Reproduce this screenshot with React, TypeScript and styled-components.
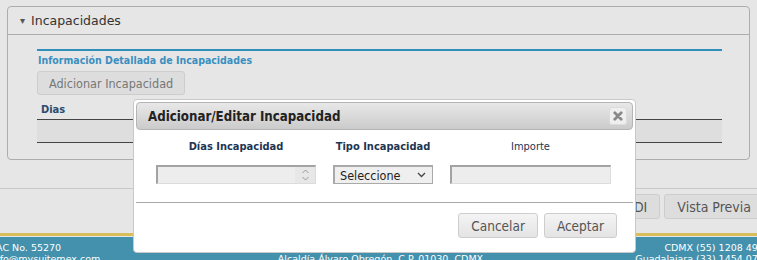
import styled, { createGlobalStyle } from 'styled-components';

const GlobalStyle = createGlobalStyle`
  html, body {
    margin: 0;
    padding: 0;
    background: #e6e6e6;
    overflow: hidden;
  }
  * {
    box-sizing: border-box;
  }
`;

const uiFont = `"DejaVu Sans Condensed", "DejaVu Sans", sans-serif`;

const App = () => {
  return (
    <>
      <GlobalStyle />
      <Page>
        <Main>
          <Panel>
            <PanelHeader>
              <Caret>▾</Caret>
              Incapacidades
            </PanelHeader>
            <PanelBody>
              <SectionTitle>Información Detallada de Incapacidades</SectionTitle>
              <GrayButton>Adicionar Incapacidad</GrayButton>
              <Table>
                <TableHead>Dias</TableHead>
                <TableRow />
              </Table>
            </PanelBody>
          </Panel>
        </Main>

        <Toolbar>
          <GrayButton $size="lg">Enviar CFDI</GrayButton>
          <GrayButton $size="lg">Vista Previa</GrayButton>
        </Toolbar>

        <Footer>
          <GoldBar />
          <FooterBand>
            <FooterCol $align="left">
              <span>PAC No. 55270</span>
              <span>info@mysuitemex.com</span>
            </FooterCol>
            <FooterCol $align="center">
              <span>Av. Revolución 1267, Col. Los Alpes</span>
              <span>Alcaldía Álvaro Obregón, C.P. 01030, CDMX</span>
            </FooterCol>
            <FooterCol $align="right">
              <span>CDMX (55) 1208 4936</span>
              <span>Guadalajara (33) 1454 0736</span>
            </FooterCol>
          </FooterBand>
        </Footer>

        <Dialog>
          <DialogTitleBar>
            <DialogTitle>Adicionar/Editar Incapacidad</DialogTitle>
            <CloseButton aria-label="Cerrar">
              <svg width="10" height="10" viewBox="0 0 10 10">
                <path d="M1.8 1.8 L8.2 8.2 M8.2 1.8 L1.8 8.2" stroke="#888" strokeWidth="2.8" strokeLinecap="round" />
              </svg>
            </CloseButton>
          </DialogTitleBar>
          <FieldGrid>
            <FieldLabel>Días Incapacidad</FieldLabel>
            <FieldLabel>Tipo Incapacidad</FieldLabel>
            <FieldLabel $plain>Importe</FieldLabel>

            <NumberBox>
              <Spinner>
                <svg width="9" height="14" viewBox="0 0 9 14">
                  <path d="M1.5 5 L4.5 2 L7.5 5 M1.5 9 L4.5 12 L7.5 9" fill="none" stroke="#9a9a9a" strokeWidth="1" />
                </svg>
              </Spinner>
            </NumberBox>
            <SelectBox>
              Seleccione
              <svg width="9" height="6" viewBox="0 0 9 6">
                <path d="M1 1 L4.5 4.5 L8 1" fill="none" stroke="#444" strokeWidth="1.3" />
              </svg>
            </SelectBox>
            <TextBox />
          </FieldGrid>
          <DialogFooter>
            <GrayButton $size="md">Cancelar</GrayButton>
            <GrayButton $size="md">Aceptar</GrayButton>
          </DialogFooter>
        </Dialog>
      </Page>
    </>
  );
};

export default App;

// Estilos
const Page = styled.div`
  position: relative;
  width: 757px;
  height: 260px;
  display: flex;
  flex-direction: column;
  overflow: hidden;
  font-family: ${uiFont};

  & > * {
    flex-shrink: 0;
  }
`;

const Main = styled.div`
  padding: 6px 7px 0 7px;
`;

const Panel = styled.section`
  height: 154px;
  border: 1px solid #adadad;
  border-radius: 4px;
  background: #e6e6e6;
`;

const PanelHeader = styled.div`
  height: 28px;
  display: flex;
  align-items: center;
  padding-left: 12px;
  border-bottom: 1px solid #adadad;
  font-family: "DejaVu Sans", sans-serif;
  font-size: 12.5px;
  color: #333;
`;

const Caret = styled.span`
  font-size: 10px;
  color: #555;
  margin-right: 6px;
`;

const PanelBody = styled.div`
  padding: 14px 27px 0 29px;
`;

const SectionTitle = styled.div`
  border-top: 2px solid #2f8fba;
  padding: 3px 0 0 1px;
  height: 22px;
  font-size: 10.5px;
  font-weight: bold;
  color: #3a8fc0;
`;

const GrayButton = styled.button<{ $size?: 'sm' | 'md' | 'lg' }>`
  font-family: ${uiFont};
  font-size: ${({ $size }) => ($size === 'md' ? '13.5px' : $size === 'lg' ? '14px' : '12.5px')};
  color: ${({ $size }) => ($size ? '#555' : '#777')};
  height: ${({ $size }) => ($size === 'md' ? '25px' : $size === 'lg' ? '25px' : '24px')};
  padding: ${({ $size }) => ($size === 'lg' ? '0 12px' : $size === 'md' ? '0 12px' : '0 11px')};
  border: 1px solid #cdcdcd;
  border-radius: 3px;
  background: ${({ $size }) => ($size === 'md' ? 'linear-gradient(#f4f4f4, #e4e4e4)' : '#dddddd')};
  cursor: pointer;
`;

const Table = styled.div`
  margin-top: 8px;
`;

const TableHead = styled.div`
  height: 17px;
  padding-left: 4px;
  border-bottom: 1px solid #444;
  font-size: 11px;
  font-weight: bold;
  color: #2c4b6d;
`;

const TableRow = styled.div`
  height: 23px;
  background: #dedede;
  border-bottom: 1px solid #444;
`;

const Toolbar = styled.div`
  margin-top: 28px;
  height: 45px;
  border-top: 1px solid #c8c8c8;
  display: flex;
  justify-content: flex-end;
  align-items: flex-start;
  gap: 4px;
  padding-top: 5px;
  margin-right: -7px;
`;

const Footer = styled.footer`
  && {
    flex: 1 1 0;
  }
  min-height: 0;
  display: flex;
  flex-direction: column;
  overflow: hidden;
`;

const GoldBar = styled.div`
  flex-shrink: 0;
  height: 4px;
  background: #d8bd5b;
  border-bottom: 1px solid #e6e6e6;
`;

const FooterBand = styled.div`
  flex: 1 0 auto;
  background: #4391ad;
  display: grid;
  grid-template-columns: 1fr 1fr 1fr;
  padding: 5px 0 0;
  margin: 0 -13px 0 -9px;
`;

const FooterCol = styled.div<{ $align: 'left' | 'center' | 'right' }>`
  display: flex;
  flex-direction: column;
  align-items: ${({ $align }) => ($align === 'left' ? 'flex-start' : $align === 'right' ? 'flex-end' : 'center')};
  font-family: "DejaVu Sans", sans-serif;
  font-size: 9.5px;
  line-height: 11px;
  color: #fff;
`;

const Dialog = styled.div`
  position: absolute;
  left: 133px;
  top: 99px;
  width: 503px;
  height: 154px;
  padding: 2px;
  background: #fff;
  border: 1px solid #c9c9c9;
  border-radius: 4px;
  display: flex;
  flex-direction: column;
`;

const DialogTitleBar = styled.div`
  height: 28px;
  display: flex;
  align-items: center;
  justify-content: space-between;
  padding: 0 5px 0 11px;
  border: 1px solid #b4b4b4;
  border-radius: 4px;
  background: linear-gradient(#e8e8e8, #cbcbcb);
`;

const DialogTitle = styled.span`
  font-size: 13.2px;
  font-weight: bold;
  color: #222;
`;

const CloseButton = styled.button`
  width: 18px;
  height: 18px;
  padding: 0;
  display: flex;
  align-items: center;
  justify-content: center;
  border: 1px solid #dcdcdc;
  border-radius: 3px;
  background: #efefef;
`;

const FieldGrid = styled.div`
  display: grid;
  grid-template-columns: 160px 100px 161px;
  align-content: start;
  column-gap: 17px;
  row-gap: 10px;
  padding: 9px 0 0 20px;
  height: 72px;
`;

const FieldLabel = styled.div<{ $plain?: boolean }>`
  text-align: center;
  font-size: 11px;
  font-weight: ${({ $plain }) => ($plain ? 'normal' : 'bold')};
  color: #1e3552;
  line-height: 16px;
`;

const inputBase = `
  height: 19px;
  background: #ededed;
  border-style: solid;
  border-width: 2px 1px 1px 2px;
  border-color: #a3a3a3 #dcdcdc #dcdcdc #a3a3a3;
`;

const NumberBox = styled.div`
  ${inputBase}
  display: flex;
  justify-content: flex-end;
`;

const Spinner = styled.div`
  width: 20px;
  display: flex;
  align-items: center;
  justify-content: center;
  background: #e7e7e7;
`;

const SelectBox = styled.div`
  height: 19px;
  display: flex;
  align-items: center;
  justify-content: space-between;
  padding: 0 6px 0 5px;
  background: #efefef;
  border: 1px solid #a9a9a9;
  border-width: 2px 1px 1px 2px;
  font-size: 12.5px;
  color: #222;
`;

const TextBox = styled.div`
  ${inputBase}
`;

const DialogFooter = styled.div`
  border-top: 1px solid #a9a9a9;
  display: flex;
  justify-content: flex-end;
  gap: 6px;
  padding: 10px 16px 0 0;
  flex: 1;
`;
